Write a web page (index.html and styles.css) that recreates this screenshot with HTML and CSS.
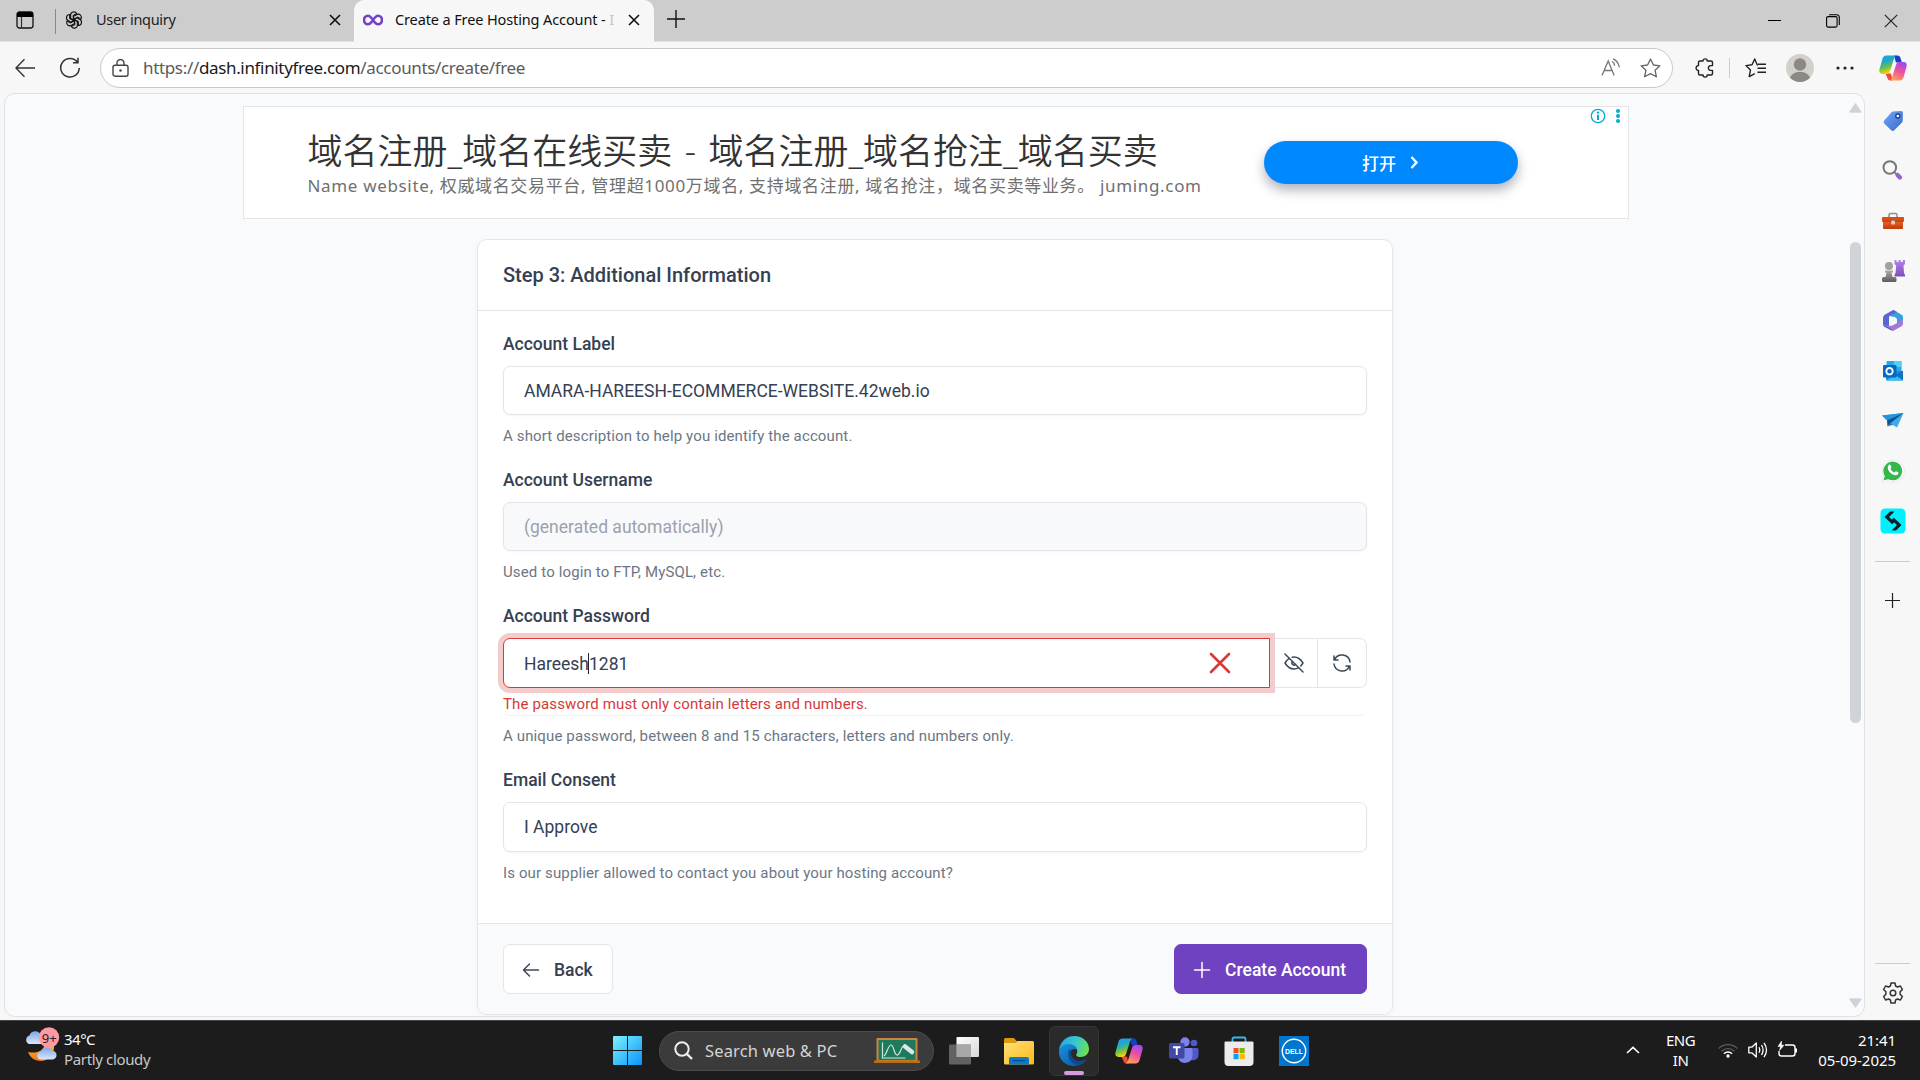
FILE: index.html
```html
<!DOCTYPE html>
<html lang="en">
<head>
<meta charset="utf-8">
<title>Create a Free Hosting Account</title>
<link rel="stylesheet" href="styles.css">
</head>
<body>
<svg class="defs" width="0" height="0">
  <defs>
    <linearGradient id="cpA" x1="0" y1="0" x2="0.3" y2="1"><stop offset="0" stop-color="#1f9df0"/><stop offset=".4" stop-color="#22a9c9"/><stop offset=".7" stop-color="#6cc04a"/><stop offset="1" stop-color="#ffd000"/></linearGradient>
    <linearGradient id="cpB" x1=".7" y1="0" x2=".3" y2="1"><stop offset="0" stop-color="#a348f0"/><stop offset=".5" stop-color="#f0529a"/><stop offset="1" stop-color="#ffa456"/></linearGradient>
    <linearGradient id="blueG" x1="0" y1="0" x2="1" y2="1"><stop offset="0" stop-color="#70a8f5"/><stop offset="1" stop-color="#3c66cf"/></linearGradient>
    <linearGradient id="winG" x1="0" y1="0" x2="1" y2="1"><stop offset="0" stop-color="#7df3ff"/><stop offset="1" stop-color="#0a93f8"/></linearGradient>
    <linearGradient id="redG" x1="0" y1="0" x2="0" y2="1"><stop offset="0" stop-color="#f0682c"/><stop offset="1" stop-color="#c33a0b"/></linearGradient>
    <linearGradient id="purG" x1="0" y1="0" x2="0" y2="1"><stop offset="0" stop-color="#b583ea"/><stop offset="1" stop-color="#7c4fb8"/></linearGradient>
    <linearGradient id="greyG" x1="0" y1="0" x2="0" y2="1"><stop offset="0" stop-color="#aaa"/><stop offset="1" stop-color="#5c5c5c"/></linearGradient>
    <linearGradient id="folderG" x1="0" y1="0" x2="1" y2="1"><stop offset="0" stop-color="#ffe07a"/><stop offset="1" stop-color="#fbb917"/></linearGradient>
    <linearGradient id="edgeTop" x1="0" y1=".3" x2="1" y2=".6"><stop offset="0" stop-color="#2aa5e0"/><stop offset=".5" stop-color="#35c8cf"/><stop offset="1" stop-color="#6fe04d"/></linearGradient>
    <linearGradient id="edgeLow" x1="0" y1="0" x2="1" y2="1"><stop offset="0" stop-color="#1795dd"/><stop offset="1" stop-color="#0c4f9f"/></linearGradient>
    <linearGradient id="cloudG" x1="0" y1="0" x2="0" y2="1"><stop offset="0" stop-color="#7ea6ea"/><stop offset="1" stop-color="#dbe7fb"/></linearGradient>
    <linearGradient id="moonG" x1="0" y1="0" x2="0" y2="1"><stop offset="0" stop-color="#ffc52e"/><stop offset="1" stop-color="#ee7317"/></linearGradient>
    <linearGradient id="whiteG" x1="0" y1="0" x2="1" y2="1"><stop offset="0" stop-color="#fff"/><stop offset="1" stop-color="#d9d9d9"/></linearGradient>
    <symbol id="copilot" viewBox="0 0 28 26">
      <path d="M15 .5h3.6c1.6 0 2.4 1 2.9 2.6l1.4 4.4h-6z" fill="#1740c8"/>
      <path d="M6.500 18.500h5.500l1.500 7h-2c-2 0-2.700-1.200-3.300-3z" fill="#f0483c"/>
      <path d="M7.500.5h10c-1.500.5-2 1.700-2.600 3.600L11 16c-.7 2-1.800 2.900-3.800 2.900H3.500c-3 0-3.700-2.200-2.900-5L3.300 4.300C4 1.700 5.200.5 7.500.5z" fill="url(#cpA)"/>
      <path d="M20.500 25.500h-10c1.500-.5 2-1.700 2.600-3.600L17 10c.7-2 1.800-2.900 3.800-2.900h3.700c3 0 3.700 2.200 2.900 5l-2.700 9.600c-.7 2.600-1.900 3.800-4.200 3.800z" fill="url(#cpB)"/>
    </symbol>
  </defs>
</svg>

<header class="tabs">
  <svg class="tabs-menu" width="18" height="18" viewBox="0 0 18 18"><rect x="1" y="1" width="16" height="16" rx="2.500" fill="none" stroke="#111" stroke-width="1.300"/><path d="M1 6V3.500A2.500 2.500 0 0 1 3.500 1h11A2.500 2.500 0 0 1 17 3.500V6z" fill="#000"/><path d="M5.500 6v11" stroke="#333" stroke-width="1.200"/></svg>
  <span class="tabs-sep"></span>
  <div class="tab">
    <svg width="18" height="18" viewBox="0 0 24 24" fill="none" stroke="#111" stroke-width="1.500"><g id="petal3"><path d="M12 12.600 7.500 10V5.500a4.300 4.300 0 0 1 8-2.200L11 6v5.500"/><path d="M12 12.600 7.500 10V5.500a4.300 4.300 0 0 1 8-2.200L11 6v5.500" transform="rotate(60 12 12)"/><path d="M12 12.600 7.500 10V5.500a4.300 4.300 0 0 1 8-2.200L11 6v5.500" transform="rotate(120 12 12)"/></g><use href="#petal3" transform="rotate(180 12 12)"/></svg>
    <span class="tab-title">User inquiry</span>
    <svg class="tab-close" width="12" height="12" viewBox="0 0 12 12"><path d="M1 1l10 10M11 1 1 11" stroke="#111" stroke-width="1.600"/></svg>
  </div>
  <div class="tab tab-active">
    <svg width="20" height="12" viewBox="0 0 20 12"><path d="M10 6C8 3 6.800 1.700 5 1.700a4 4.300 0 0 0 0 8.600C6.800 10.300 8 9 10 6s3.200-4.300 5-4.300a4 4.300 0 0 1 0 8.600C13.200 10.300 12 9 10 6z" fill="none" stroke="#7442c8" stroke-width="2.600"/></svg>
    <span class="tab-title tab-title-cut">Create a Free Hosting Account - <i>I</i></span>
    <svg class="tab-close" width="12" height="12" viewBox="0 0 12 12"><path d="M1 1l10 10M11 1 1 11" stroke="#111" stroke-width="1.600"/></svg>
  </div>
  <svg class="tab-new" width="18" height="18" viewBox="0 0 18 18"><path d="M9 0v18M0 9h18" stroke="#111" stroke-width="1.400"/></svg>
  <div class="win-buttons">
    <svg width="14" height="14" viewBox="0 0 14 14"><path d="M0 6.500h13" stroke="#000"/></svg>
    <svg width="14" height="14" viewBox="0 0 14 14" fill="none" stroke="#000" stroke-width="1.100"><rect x=".6" y="2.600" width="10.500" height="10.500" rx="1.500"/><path d="M3 .7h7.500a2.500 2.500 0 0 1 2.800 2.600V11"/></svg>
    <svg width="14" height="14" viewBox="0 0 14 14"><path d="M.8.800l12.400 12.400M13.200.8.800 13.200" stroke="#222" stroke-width="1.200"/></svg>
  </div>
</header>

<nav class="toolbar">
  <svg class="nav-back" width="20" height="20" viewBox="0 0 20 20" fill="none" stroke="#333" stroke-width="1.400"><path d="M20 10H1M9.500 1.200 1 10l8.500 8.800"/></svg>
  <svg class="nav-reload" width="22" height="22" viewBox="0 0 22 22" fill="none" stroke="#333" stroke-width="1.500"><path d="M18.500 5.200A9.300 9.300 0 1 0 20.300 11M19 .8v5h-5"/></svg>
  <div class="address">
    <svg width="17" height="18" viewBox="0 0 17 18" fill="none" stroke="#444" stroke-width="1.400"><rect x="1" y="6.200" width="15" height="11" rx="2"/><path d="M5 6V4a3.500 3.500 0 0 1 7 0v2"/><circle cx="8.500" cy="11.500" r=".6" fill="#333"/></svg>
    <span class="url"><b>https://</b>dash.infinityfree.com<b>/accounts/create/free</b></span>
    <svg class="read" width="20" height="19" viewBox="0 0 20 19" fill="none" stroke="#777" stroke-width="1.300"><path d="M1 17.500 7.200 3l6 14.500M3.200 12.500h8M11 3.200c1.700.9 2.500 2.300 2.600 4.600M12 .8c3.400 1.300 5.500 4 6.300 8.500"/></svg>
    <svg width="21" height="20" viewBox="0 0 21 20" fill="none" stroke="#666" stroke-width="1.300" stroke-linejoin="round"><path d="M10.500 1l2.900 6 6.500.8-4.800 4.500 1.300 6.500-5.900-3.200-5.900 3.200 1.300-6.500L1.100 7.800 7.600 7z"/></svg>
  </div>
  <svg class="ext" width="20" height="20" viewBox="0 0 20 20" fill="none" stroke="#222" stroke-width="1.400" stroke-linejoin="round"><path d="M5 3h3a2.100 2.100 0 0 1 4.200 0H16a1.500 1.500 0 0 1 1.500 1.500V7.600h-1.700a2.400 2.400 0 0 0 0 4.800h1.700v3.100A1.500 1.500 0 0 1 16 17h-3.800a2.100 2.100 0 0 1-4.200 0H5a1.500 1.500 0 0 1-1.500-1.500v-3.100a2.400 2.400 0 0 1 0-4.800V4.500A1.500 1.500 0 0 1 5 3z"/></svg>
  <span class="tool-sep"></span>
  <svg class="fav" width="21" height="20" viewBox="0 0 21 20" fill="none" stroke="#222" stroke-width="1.400" stroke-linejoin="round"><path d="M13 7.200 12.300 7 9.700 1 7 6.800.9 7.600l4.600 4.300-1.300 6.700 5.600-3M13 6.200h8M12.500 10.200H21M12.500 14.300H21"/></svg>
  <svg class="avatar" width="28" height="28" viewBox="0 0 28 28"><circle cx="14" cy="14" r="14" fill="#d4d1cd"/><circle cx="14" cy="10.500" r="6.200" fill="#8b8886"/><path d="M4 23.800C5.500 20 9 18 14 18s8.500 2 10 5.800A14 14 0 0 1 4 23.800z" fill="#8b8886"/></svg>
  <svg class="more" width="18" height="4" viewBox="0 0 18 4" fill="#222"><circle cx="2" cy="2" r="1.600"/><circle cx="9" cy="2" r="1.600"/><circle cx="16" cy="2" r="1.600"/></svg>
  <svg class="cop" width="28" height="26"><use href="#copilot"/></svg>
</nav>

<div class="main">
  <main class="viewport">
    <section class="ad">
      <div class="ad-copy">
        <div class="ad-title">域名注册_域名在线买卖 - 域名注册_域名抢注_域名买卖</div>
        <div class="ad-sub">Name website, 权威域名交易平台, 管理超1000万域名, 支持域名注册, 域名抢注，域名买卖等业务。 juming.com</div>
      </div>
      <div class="ad-button">打开<svg width="9" height="13" viewBox="0 0 9 13"><path d="M1.500 1l5 5.500-5 5.500" fill="none" stroke="#fff" stroke-width="2.400"/></svg></div>
      <svg class="ad-info" width="32" height="16" viewBox="0 0 32 16"><circle cx="8" cy="8" r="6.700" fill="none" stroke="#00aecd" stroke-width="1.300"/><path d="M8 6.800V12" stroke="#00aecd" stroke-width="2"/><circle cx="8" cy="4.600" r="1.200" fill="#00aecd"/><g fill="#00aecd"><circle cx="28" cy="3" r="2"/><circle cx="28" cy="8" r="2"/><circle cx="28" cy="13" r="2"/></g></svg>
    </section>

    <section class="card">
      <h3 class="card-header">Step 3: Additional Information</h3>
      <div class="card-body">
        <div class="field">
          <label>Account Label</label>
          <div class="control short">AMARA-HAREESH-ECOMMERCE-WEBSITE.42web.io</div>
          <small>A short description to help you identify the account.</small>
        </div>
        <div class="field">
          <label>Account Username</label>
          <div class="control short disabled">(generated automatically)</div>
          <small>Used to login to FTP, MySQL, etc.</small>
        </div>
        <div class="field">
          <label>Account Password</label>
          <div class="group">
            <div class="group-row">
              <div class="control invalid"><span>Hareesh</span><span class="caret"></span><span>1281</span>
                <svg class="cross" width="24" height="24" viewBox="0 0 24 24"><path d="M3 3l18 18M21 3 3 21" stroke="#d63939" stroke-width="2.600" stroke-linecap="round"/></svg></div>
              <div class="addon addon-eye"><svg width="24" height="24" viewBox="0 0 24 24" fill="none" stroke="#3d4859" stroke-width="1.500" stroke-linecap="round" stroke-linejoin="round"><path d="M10.585 10.587a2 2 0 0 0 2.829 2.828"/><path d="M16.681 16.673a8.717 8.717 0 0 1-4.681 1.327c-3.600 0-6.600-2-9-6 1.272-2.120 2.712-3.678 4.320-4.674m2.860-1.146a9.055 9.055 0 0 1 1.820-.18c3.600 0 6.600 2 9 6-.666 1.110-1.379 2.067-2.138 2.870"/><path d="M3 3l18 18"/></svg></div>
              <div class="addon addon-last"><svg width="24" height="24" viewBox="0 0 24 24" fill="none" stroke="#3d4859" stroke-width="1.500" stroke-linecap="round" stroke-linejoin="round"><path d="M20 11a8.100 8.100 0 0 0-15.500-2m-.5-4v4h4"/><path d="M4 13a8.100 8.100 0 0 0 15.500 2m.5 4v-4h-4"/></svg></div>
            </div>
            <div class="error">The password must only contain letters and numbers.</div>
          </div>
          <small>A unique password, between 8 and 15 characters, letters and numbers only.</small>
        </div>
        <div class="field">
          <label>Email Consent</label>
          <div class="control">I Approve</div>
          <small class="low">Is our supplier allowed to contact you about your hosting account?</small>
        </div>
      </div>
      <div class="card-footer">
        <div class="btn"><svg width="24" height="24" viewBox="0 0 24 24" fill="none" stroke="#3d4859" stroke-width="1.500" stroke-linecap="round" stroke-linejoin="round"><path d="M4.500 12h15M4.500 12l6 6M4.500 12l6-6"/></svg>Back</div>
        <div class="btn primary"><svg width="24" height="24" viewBox="0 0 24 24" fill="none" stroke="#fff" stroke-width="1.500" stroke-linecap="round"><path d="M12 4.500v15M4.500 12h15"/></svg>Create Account</div>
      </div>
    </section>
    <div class="scrollbar">
      <svg width="13" height="10" viewBox="0 0 13 10"><path d="M5.600.900a1 1 0 0 1 1.700 0l5 7.300a1 1 0 0 1-.8 1.500H1.400a1 1 0 0 1-.8-1.500z" fill="#cfd3d8"/></svg>
      <span class="thumb"></span>
      <svg width="13" height="10" viewBox="0 0 13 10"><path d="M5.600 9.100a1 1 0 0 0 1.700 0l5-7.300A1 1 0 0 0 11.500.3H1.400a1 1 0 0 0-.8 1.500z" fill="#cfd3d8"/></svg>
    </div>
  </main>

  <aside class="sidebar">
    <svg width="26" height="26" viewBox="0 0 26 26"><path d="M13 3.500 21 3a2 2 0 0 1 2 2l-.3 8c0 .6-.3 1-.7 1.500l-7.700 7.800a2.200 2.200 0 0 1-3.100 0l-7-6.700a2.200 2.200 0 0 1 0-3l7.300-8.300a2 2 0 0 1 1.500-.8z" fill="url(#blueG)"/><circle cx="17.800" cy="8" r="2" fill="#fff" stroke="#1f408f" stroke-width="1.400"/></svg>
    <svg width="26" height="26" viewBox="0 0 26 26"><circle cx="9.800" cy="9.500" r="6.300" fill="none" stroke="#777" stroke-width="2"/><path d="M14.500 14.200l3 3" stroke="#777" stroke-width="1.800"/><path d="M17.500 17 20 19.500" stroke="#9560cf" stroke-width="4.200" stroke-linecap="round"/></svg>
    <svg width="26" height="26" viewBox="0 0 26 26"><path d="M9 9.500V7a1.500 1.500 0 0 1 1.500-1.500h5A1.500 1.500 0 0 1 17 7v2.500" fill="none" stroke="#8d8d8d" stroke-width="1.500"/><rect x="2" y="9" width="22" height="5" rx="1" fill="#d84f15"/><rect x="3" y="12" width="20" height="9" rx="1" fill="url(#redG)"/><path d="M3 13h20" stroke="#a32d08"/><rect x="11.200" y="12.500" width="3.800" height="4" rx="1" fill="#cfcfcf"/></svg>
    <svg width="26" height="26" viewBox="0 0 26 26"><path d="M14.500 2h2v2h2V2h2.200v2h2V2H25v4l-1.500 1.500.5 7.500 1 2v1.500H14.500V17l1-2 .7-7.500L14.500 6z" fill="url(#purG)"/><circle cx="9" cy="8" r="4" fill="#a1a1a1"/><path d="M5 12.500h8v2h-1.500l1 4.500H15a1.500 1.500 0 0 1 1.500 1.500v2q0 1.500-1.500 1.500H3.500Q2 24 2 22.500v-2A1.500 1.500 0 0 1 3.500 19h2l1-4.500H5z" fill="url(#greyG)"/></svg>
    <svg width="26" height="26" viewBox="0 0 26 26"><path d="M10 3.800 13.500 2 22 7a2 2 0 0 1 1 2v6L17 17.500V11L10.500 8z" fill="#3ba0dc"/><path d="M13.500 2 6 6C4 7 3 8.500 3 10v6c0 2 1.300 3 3 3l3-1V10c0-1.500.5-2 2-3l6-3z" fill="#5a66d4"/><path d="M3.500 17 9 20.500 13 23l8.500-4.700c1-.6 1.500-1.500 1.500-3V11l-6 4-4.500 2.500L9 18z" fill="#a377d8"/><path d="M3 10v6c0 1.500 1.200 2.500 3 2l6.500 4-1 .5-6.500-3.600C3.700 18 3 17 3 15.500" fill="#4d55bd"/><circle cx="13" cy="12.500" r="3.800" fill="#f7f7f7"/></svg>
    <svg width="26" height="26" viewBox="0 0 26 26"><rect x="6.500" y="3" width="15" height="12" rx="1" fill="#28a8ea"/><path d="M14 3h7.500v6H14z" fill="#50d0fa"/><path d="M6 13h17v8.500a1 1 0 0 1-1 1H7a1 1 0 0 1-1-1z" fill="#1490df"/><path d="M23 12.500v9.500L15 17z" fill="#0f6fc0"/><path d="M6.500 22.500 15 17l8 5.500z" fill="#39bdf3"/><rect x="3" y="7" width="13.500" height="12.500" rx="1.200" fill="#0768c2"/><circle cx="9.500" cy="13.200" r="3.200" fill="none" stroke="#fff" stroke-width="1.900"/></svg>
    <svg width="26" height="26" viewBox="0 0 26 26"><path d="M2 7.500 23.500 5 17 19.500 10.500 15.500z" fill="#39ace9"/><path d="M2 7.500 23.500 5 7 12.500z" fill="#2494db"/><path d="M7 12.500 23.500 5 10.500 15 7.500 18.500z" fill="#0e4f8f"/><path d="M7.500 18.500l3-3.500 2.500 1.700z" fill="#1b75bd"/></svg>
    <svg width="26" height="26" viewBox="0 0 26 26"><path d="M1.800 24.200 3.500 18a11 11 0 1 1 4.200 4.500z" fill="#fff" stroke="#ddd" stroke-width=".6"/><path d="M3.500 22.300 4.800 18a9.400 9.400 0 1 1 3.400 3.200z" fill="#35b84b"/><path d="M8.800 7c.6-.6 1.500-.6 1.800.2l.8 1.900c.2.500-.6 1.200-1 1.700.8 1.700 2.200 3 4 3.800.6-.6 1.200-1.500 1.700-1.300l2 1c.6.400.4 1.300-.1 2-2.700 2.900-10.700-1.600-10.200-7 .1-.9.500-1.800 1-2.300z" fill="#fff"/></svg>
    <svg width="26" height="26" viewBox="0 0 26 26"><rect x=".5" y=".5" width="25" height="25" rx="4.500" fill="#00f0ff"/><path d="M10 3.500h4.500L9 9l5.500 5-2.300 2.300L4.500 9zM16 22.500h-4.500L17 17l-5.500-5 2.300-2.300 7.700 7.300z" fill="#0a2226"/></svg>
    <span class="side-sep"></span>
    <svg class="side-plus" width="15" height="15" viewBox="0 0 15 15"><path d="M7.500 0v15M0 7.500h15" stroke="#222" stroke-width="1.200"/></svg>
    <span class="side-sep side-sep-low"></span>
    <svg class="gear" width="22" height="22" viewBox="0 0 22 22" fill="none" stroke="#333" stroke-width="1.500" stroke-linejoin="round"><path d="M9 1h4l.6 3 1.800 1 3-1 2 3.500-2.300 2.200v2.600l2.300 2.200-2 3.500-3-1-1.800 1L13 21H9l-.6-3-1.800-1-3 1-2-3.500 2.300-2.200V9.700L1.600 7.500l2-3.500 3 1 1.800-1z"/><circle cx="11" cy="11" r="2.800"/></svg>
  </aside>
</div>

<footer class="taskbar">
  <div class="weather">
    <svg width="36" height="36" viewBox="0 0 36 36"><path d="M30 18c1 9-6 16-13 16-7 0-11-4-13-9 9 2 16-1 17-9z" fill="url(#moonG)"/><path d="M5 17a4.500 4.500 0 0 1 .5-8.500 6 6 0 0 1 11-1L19 17z" fill="url(#cloudG)"/><path d="M17 32.500a4 4 0 0 1 .5-8 5.500 5.500 0 0 1 10.300-.8 4.400 4.400 0 0 1 .7 8.800z" fill="url(#cloudG)"/><circle cx="25" cy="10.500" r="10.200" fill="#ff99a4"/><text x="17.800" y="15.500" class="badge-text">9+</text></svg>
    <div class="weather-text"><b>34°C</b><span>Partly cloudy</span></div>
  </div>
  <div class="apps">
    <svg class="start" width="29" height="29" viewBox="0 0 29 29"><path d="M0 1a1 1 0 0 1 1-1h13v14H0zM15 0h13a1 1 0 0 1 1 1v13H15zM0 15h14v14H1a1 1 0 0 1-1-1zM15 15h14v13a1 1 0 0 1-1 1H15z" fill="url(#winG)"/></svg>
    <div class="search">
      <svg width="19" height="19" viewBox="0 0 19 19" fill="none" stroke="#eee" stroke-width="2"><circle cx="8" cy="8" r="6.700"/><path d="M12.800 12.800 18 18" stroke-width="2.400"/></svg>
      <span>Search web &amp; PC</span>
      <svg class="board" width="46" height="28" viewBox="0 0 46 28"><rect x="2.500" y="1" width="41" height="24" rx="1" fill="#c98342"/><rect x="4.500" y="3" width="37" height="20" fill="#1d7a5a"/><path d="M0 23.500h46v2.500H0z" fill="#b86e12"/><path d="M8.500 5.500V21h23M10 19c3-2 4-11 7-11s3 10 6 10 3-5 6-9" fill="none" stroke="#cfe8dd" stroke-width="1.200"/><path d="M31 9.500l7 5.500" stroke="#e3e3ee" stroke-width="4.500" stroke-linecap="round"/></svg>
    </div>
    <div class="app"><svg width="30" height="28" viewBox="0 0 30 28"><rect x="7.500" y="0" width="22.500" height="20" rx="1" fill="url(#whiteG)"/><rect x="0" y="7.500" width="22" height="20" rx="1" fill="#6e6e6e" fill-opacity=".85"/><path d="M7.500 7.500H22V20H7.500z" fill="#a8a8a8"/></svg></div>
    <div class="app"><svg width="30" height="28" viewBox="0 0 30 28"><path d="M0 2.500A1.500 1.500 0 0 1 1.500 1H10l3 3.500V9H0z" fill="#dc9b0c"/><path d="M0 6h11.500l2-2h15A1.500 1.500 0 0 1 30 5.500V26a1.500 1.500 0 0 1-1.500 1.500h-27A1.500 1.500 0 0 1 0 26z" fill="url(#folderG)"/><path d="M5 27.500V22a2 2 0 0 1 2-2h16a2 2 0 0 1 2 2v5.500z" fill="#0f79c8"/><path d="M9 23.700h12" stroke="#064c88" stroke-width="1.300" stroke-linecap="round"/></svg></div>
    <div class="app app-active"><svg width="30" height="30" viewBox="0 0 30 30"><path d="M0 14C1 6 7 0 15 0c9 0 15 6 15 13 0 5-4 8-8.500 8-3.500 0-5-1.500-4-3 1.500-2.200 1-5-1.500-6.500C11 8.500 3 9 0 14z" fill="url(#edgeTop)"/><path d="M0 15C1.500 9.500 6 7.500 10.500 8c4 .5 7 2.500 7.400 5.500-6-2-7.400 4-4.900 8s9 5 14.500 1.800C25 28 20 30 15 30 6 30-.5 23 0 15z" fill="url(#edgeLow)"/><path d="M10 14c-2 5 0 11 5 14 4 2 9 0 12.500-4.700-5.500 3.200-12 2.200-14.500-1.800-1.500-2.500-1.500-6 .5-8z" fill="#0d4a92"/></svg></div>
    <div class="app"><svg width="28" height="26"><use href="#copilot"/></svg></div>
    <div class="app"><svg width="30" height="28" viewBox="0 0 30 28"><circle cx="25" cy="6" r="3.300" fill="#5059c9"/><circle cx="16" cy="5" r="4.700" fill="#7b83eb"/><path d="M19 11h9a1.500 1.500 0 0 1 1.500 1.500V18a5.500 5.500 0 0 1-9 4z" fill="#5059c9"/><path d="M9 11h13a1.500 1.500 0 0 1 1.500 1.500V19a7.500 7.500 0 0 1-14.500 2z" fill="#7b83eb"/><rect x="0" y="6" width="15.500" height="15.500" rx="1.500" fill="#4048a8"/><path d="M4 10.300h7.500M7.750 10.300v7.700" stroke="#fff" stroke-width="1.900"/></svg></div>
    <div class="app"><svg width="30" height="30" viewBox="0 0 30 30"><path d="M8.500 7V3A1.500 1.500 0 0 1 10 1.500h10A1.500 1.500 0 0 1 21.500 3v4" fill="none" stroke="#35b8f1" stroke-width="1.800"/><path d="M.5 6.500a1 1 0 0 1 1-1h27a1 1 0 0 1 1 1V26a4 4 0 0 1-4 4h-21a4 4 0 0 1-4-4z" fill="#ececec"/><path d="M9.500 12H14.500v5.200H9.500z" fill="#f25022"/><path d="M15.500 12h5.200v5.200h-5.200z" fill="#7fba00"/><path d="M9.500 18H14.500v5.200H9.500z" fill="#00a4ef"/><path d="M15.500 18h5.200v5.200h-5.200z" fill="#ffb900"/></svg></div>
    <div class="app"><svg width="30" height="30" viewBox="0 0 30 30"><rect width="30" height="30" fill="#0076ce"/><circle cx="15" cy="15" r="11.700" fill="none" stroke="#fff" stroke-width="1.400"/><text x="6" y="17.800" class="dell-text" textLength="18" lengthAdjust="spacingAndGlyphs">DELL</text></svg></div>
  </div>
  <div class="tray">
    <svg class="up" width="14" height="8" viewBox="0 0 14 8"><path d="M1 7l6-5.700L13 7" fill="none" stroke="#fff" stroke-width="1.600"/></svg>
    <div class="lang"><span>ENG</span><span>IN</span></div>
    <svg class="wifi" width="20" height="16" viewBox="0 0 20 16" fill="none" stroke-width="1.400"><path d="M.7 6.500a13 13 0 0 1 18.600 0M3.500 9.300a9.200 9.200 0 0 1 13 0" stroke="#5b5b5b"/><path d="M6 11.700a5.600 5.600 0 0 1 8 0" stroke="#fff" stroke-width="1.600"/><circle cx="10" cy="14" r="1.700" fill="#fff"/></svg>
    <svg class="vol" width="20" height="18" viewBox="0 0 20 18" fill="none" stroke="#fff" stroke-width="1.300" stroke-linejoin="round"><path d="M.8 6.200h3L8.300 2v14l-4.500-4.200h-3zM11 6.200q1.600 2.800 0 5.600M13.500 4q3.200 5 0 10M16 1.800q5 7.200 0 14.400"/></svg>
    <svg class="bat" width="21" height="18" viewBox="0 0 21 18" fill="none" stroke="#fff" stroke-width="1.400"><path d="M8 4h7.500A2.500 2.500 0 0 1 18 6.500v6a2.500 2.500 0 0 1-2.500 2.500h-11A2.500 2.500 0 0 1 2 12.500V10"/><path d="M19 7.500v4" stroke-width="2"/><path d="M4.500 0 1 5.500h2.500L2.500 9.500 7 4.200H4.500z" fill="#fff" stroke-width=".5"/></svg>
    <div class="clock"><span>21:41</span><span>05-09-2025</span></div>
  </div>
</footer>
</body>
</html>
```
FILE: styles.css
```css
* { box-sizing: border-box; }
body {
  margin: 0;
  width: 1920px;
  height: 1080px;
  overflow: hidden;
  display: flex;
  flex-direction: column;
  background: #f7f7f7;
  font-family: "Noto Sans", "Open Sans", sans-serif;
}
svg { display: block; flex: none; }
.defs { position: absolute; }

/* tab strip */
.tabs { height: 42px; display: flex; align-items: center; background: #cdcdcd; border-bottom: 1px solid #e2e2e2; flex: none; }
.tabs-menu { margin-left: 16px; margin-bottom: 2px; }
.tabs-sep { width: 1px; height: 25px; background: #888; margin: 2px 9px 0 21px; }
.tab { width: 289px; height: 42px; display: flex; align-items: center; padding: 0 13px 2px 0; font-size: 14.5px; color: #222; letter-spacing: -0.3px; }
.tab-title { margin-left: 13px; padding-bottom: 2px; white-space: nowrap; }
.tab-close { margin-left: auto; }
.tab-active { width: 300px; background: #f7f7f7; border-radius: 10px 10px 0 0; padding: 0 14px 2px 9px; color: #111; letter-spacing: -0.12px; }
.tab-title-cut { margin-left: 12px; }
.tab-title-cut i { font-style: normal; color: #c4c4c4; }
.tab-new { margin: 0 0 4px 13px; }
.win-buttons { margin-left: auto; display: flex; gap: 44px; padding-right: 22px; padding-top: 1px; }

/* toolbar */
.toolbar { height: 50px; display: flex; align-items: center; padding-top: 1px; flex: none; }
.nav-back { margin-left: 15px; }
.nav-reload { margin-left: 24px; }
.address { margin: 0 0 0 19px; width: 1573px; height: 40px; border: 1px solid #c9c9c9; border-radius: 20px; background: #fff; display: flex; align-items: center; padding: 0 11px; }
.url { margin-left: 14px; font-size: 17px; color: #1a1a1a; letter-spacing: -0.34px; padding-bottom: 1px; }
.url b { font-weight: 400; color: #5a5a5a; }
.read { margin-left: auto; margin-right: 19px; }
.ext { margin-left: 22px; }
.tool-sep { width: 1px; height: 20px; background: #ccc; margin-left: 14px; }
.fav { margin-left: 15px; }
.avatar { margin-left: 20px; }
.more { margin-left: 22px; }
.cop { margin-left: 25px; }

/* page area */
.main { height: 928px; display: flex; flex: none; }
.viewport { position: relative; width: 1861px; height: 924px; margin: 1px 0 0 4px; border: 1px solid #e0e1e4; border-radius: 11px; background: #f9fafc; overflow: hidden; display: flex; flex-direction: column; align-items: center; }
.ad { position: relative; width: 1386px; height: 113px; margin: 12px 0 0 2px; flex: none; border: 1px solid #e3e5e7; background: #fff; display: flex; }
.ad-copy { padding: 19px 0 0 64px; width: 1020px; white-space: nowrap; }
.ad-title { font-size: 35px; line-height: 50px; color: #333; font-weight: 350; word-spacing: 3.400px; font-family: "Noto Sans", "Noto Sans CJK SC", sans-serif; }
.ad-sub { font-size: 17px; line-height: 20px; color: #707070; letter-spacing: 0.66px; font-weight: 400; font-family: "Noto Sans", "Noto Sans CJK SC", sans-serif; }
.ad-button { width: 254px; height: 43px; margin-top: 34px; border-radius: 22px; background: #0088ff; color: #fff; box-shadow: 0 6px 12px rgba(60, 60, 90, .4); display: flex; align-items: center; justify-content: center; gap: 14px; font: 500 17px "Noto Sans CJK SC", sans-serif; }
.ad-info { position: absolute; right: 6px; top: 1px; }

.card { width: 916px; height: 776px; margin: 20px 0 0 1px; flex: none; border: 1px solid #e4e6ea; border-radius: 10px; background: #fff; overflow: hidden; display: flex; flex-direction: column; font-family: Roboto, sans-serif; color: #354052; box-shadow: 0 2px 5px rgba(30, 40, 60, .04); }
.card-header { margin: 0; height: 71px; padding: 0 25px; border-bottom: 1px solid #e4e6ea; font-size: 20px; font-weight: 500; line-height: 70px; }
.card-body { flex: 1; padding: 21px 25px 0; }
.field { display: flex; flex-direction: column; margin-bottom: 21px; }
.field label { font-size: 17.500px; font-weight: 500; line-height: 25px; margin-bottom: 9px; }
.control { height: 50px; border: 1px solid #e3e5ea; border-radius: 7px; padding: 0 20px; font-size: 17.500px; line-height: 48px; background: #fff; box-shadow: 0 1px 2px rgba(30, 40, 60, .05); }
.short { height: 49px; margin-bottom: 1px; }
.disabled { background: #f8f9fb; color: #9ba1ad; }
.field small { margin-top: 9px; font-size: 15px; line-height: 22px; color: #6c7684; letter-spacing: 0.13px; }
.field .low { margin-top: 10px; }
.group { border-bottom: 1px solid #f1f2f4; border-radius: 7px; }
.group-row { display: flex; }
.invalid { position: relative; z-index: 1; flex: 1; display: flex; align-items: center; border-color: #d63939; border-radius: 7px 0 0 7px; box-shadow: 0 0 0 5px #f5cccc; }
.invalid span { padding-top: 1px; }
.caret { width: 1px; height: 21px; margin: 0 0 0 -1px; background: #1d2735; }
.cross { margin: 0 17px 0 auto; }
.addon { width: 48px; height: 50px; border: 1px solid #e3e5ea; border-left: 0; display: flex; align-items: center; justify-content: center; }
.addon-last { width: 49px; border-radius: 0 7px 7px 0; }
.error { font-size: 15px; line-height: 22px; padding: 5px 0 0; color: #d63939; letter-spacing: 0.14px; }
.group + small { margin-top: 9px; }
.card-footer { height: 91px; background: #f9fafc; border-top: 1px solid #e4e6ea; padding: 0 25px; display: flex; align-items: center; justify-content: space-between; }
.btn { height: 50px; border: 1px solid #e3e5ea; border-radius: 7px; background: #fff; padding: 1px 19px 0 15px; display: flex; align-items: center; gap: 11px; font-size: 17.500px; font-weight: 500; }
.primary { padding-right: 20px; background: #6f42c1; border-color: #6f42c1; color: #fff; }

.scrollbar { position: absolute; right: 1px; top: 9px; width: 15px; height: 905px; display: flex; flex-direction: column; align-items: center; }
.scrollbar svg:last-child { margin-top: auto; }
.thumb { width: 11px; height: 481px; margin-top: 129px; border-radius: 6px; background: #d0d3d8; }

/* edge sidebar */
.sidebar { flex: 1; display: flex; flex-direction: column; align-items: center; padding: 16px 0 0 0; gap: 23.950px; }
.side-sep { width: 35px; height: 1px; background: #cbcbcb; margin-top: 4px; }
.side-plus { margin-top: 7px; }
.side-sep-low { margin-top: auto; }
.gear { margin: -6px 0 16px; }

/* taskbar */
.taskbar { height: 60px; flex: none; background: #1c1c1c; border-top: 1px solid #444; display: grid; grid-template-columns: 613px 1fr auto; color: #fff; }
.weather { display: flex; padding: 6px 0 0 24px; gap: 4px; }
.badge-text { font-size: 13px; fill: #222; }
.weather-text { display: flex; flex-direction: column; font-size: 15px; line-height: 20px; padding-top: 2px; }
.weather-text b { font-weight: 400; letter-spacing: -0.5px; }
.weather-text span { color: #c8c8c8; letter-spacing: -0.35px; }
.apps { display: flex; align-items: center; }
.start { margin-right: 17px; }
.search { width: 275px; height: 40px; border-radius: 20px; background: #3b3b3b; border: 1px solid #4c4c4c; display: flex; align-items: center; padding: 0 13px 0 14px; margin-right: 2px; }
.search span { margin-left: 12px; font-size: 16.500px; color: #d4d4d4; letter-spacing: 0.15px; }
.board { margin-left: auto; }
.app { position: relative; width: 50px; height: 50px; margin: 0 2.500px; display: flex; align-items: center; justify-content: center; }
.app-active { background: #2a2a2a; border: 1px solid #363636; border-radius: 6px; }
.app-active::after { content: ""; position: absolute; bottom: 0; width: 20px; height: 4px; border-radius: 2px; background: #d69be0; }
.dell-text { font: 700 7.500px "Liberation Sans", sans-serif; fill: #fff; }
.tray { display: flex; align-items: center; padding: 0 24px 2px 0; font-size: 15px; line-height: 20px; }
.up { margin-right: 26px; }
.lang { display: flex; flex-direction: column; align-items: center; letter-spacing: -0.5px; margin-right: 23px; }
.wifi { margin-right: 10px; }
.vol { margin-right: 9px; }
.bat { margin-right: 20px; }
.clock { display: flex; flex-direction: column; align-items: flex-end; letter-spacing: -0.05px; }
```
